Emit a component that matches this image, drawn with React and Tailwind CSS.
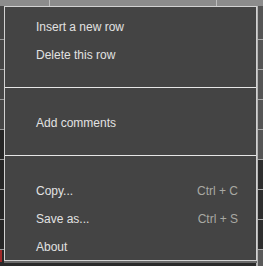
import React from "react"

const font = { fontFamily: '"Liberation Sans", Arial, sans-serif' }

function Item({ label, shortcut }) {
  return (
    <div className="flex h-[28px] items-center justify-between pl-[31px] pr-[18px] pt-[2px]">
      <span className="text-[12px] text-[#e2e2e2]">{label}</span>
      {shortcut && <span className="text-[12px] text-[#a9a9a3]">{shortcut}</span>}
    </div>
  )
}

function Backdrop() {
  const rows = [34, 30, 30, 30, 30, 30, 30, 30]
  return (
    <div className="flex h-full w-full flex-col bg-[#2a2a2a]">
      <div className="flex h-[6px] shrink-0 bg-[#8c8c8c]">
        <div className="w-[50px] border-r border-[#bdbdbd]" />
        <div className="w-[167px] border-r border-[#bdbdbd]" />
        <div className="flex-1" />
      </div>
      <div className="flex flex-1">
        <div className="flex w-[4px] flex-col">
          {rows.map((h, i) => (
            <div
              key={i}
              style={{ height: h }}
              className={`border-b border-[#9a9a9a] ${i < 4 ? "bg-[#454545]" : "bg-[#262626]"}`}
            />
          ))}
          <div className="h-[12px] border-l-2 border-[#a02828] bg-[#262626]" />
        </div>
        <div className="flex-1" />
        <div className="flex w-[7px] flex-col border-l-2 border-[#b4b4b4] bg-[#5a5a5a]">
          {rows.map((h, i) => (
            <div
              key={i}
              style={{ height: h }}
              className={`border-b border-[#a8a8a8] ${i > 4 ? "bg-[#2e2e2e]" : "bg-[#555555]"}`}
            />
          ))}
        </div>
      </div>
    </div>
  )
}

export default function App() {
  return (
    <div className="relative h-[266px] w-[263px] overflow-hidden" style={font}>
      <Backdrop />
      <div className="absolute left-[4px] top-[6px] w-[253px] border border-[#d2d2d2] bg-[#444444] shadow-[0_2px_0_#6a6a6a]">
        <div className="pt-[5px] pb-[19px]">
          <Item label="Insert a new row" />
          <Item label="Delete this row" />
        </div>
        <div className="h-px bg-[#e6e6e6]" />
        <div className="pt-[20px] pb-[19px]">
          <Item label="Add comments" />
        </div>
        <div className="h-px bg-[#e6e6e6]" />
        <div className="pt-[20px]">
          <Item label="Copy..." shortcut="Ctrl + C" />
          <Item label="Save as..." shortcut="Ctrl + S" />
          <Item label="About" />
        </div>
      </div>
    </div>
  )
}
